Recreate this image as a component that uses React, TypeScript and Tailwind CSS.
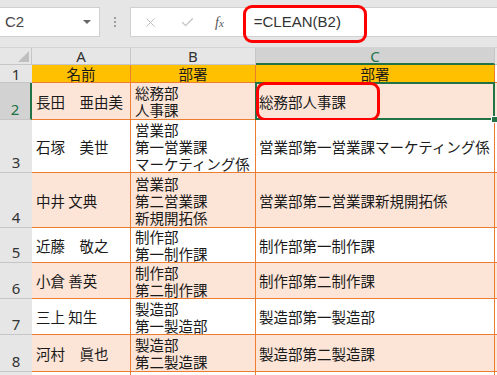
import React from "react";
import { X, Check } from "lucide-react";

interface Row {
    n: number;
    a: string;
    b: string[];
    c: string;
    h: string;
    fill: boolean;
}

const rows: Row[] = [
    { n: 2, a: "長田　亜由美", b: ["総務部", "人事課"], c: "総務部人事課", h: "h-[37px]", fill: true },
    { n: 3, a: "石塚　美世", b: ["営業部", "第一営業課", "マーケティング係"], c: "営業部第一営業課マーケティング係", h: "h-[53px]", fill: false },
    { n: 4, a: "中井 文典", b: ["営業部", "第二営業課", "新規開拓係"], c: "営業部第二営業課新規開拓係", h: "h-[55px]", fill: true },
    { n: 5, a: "近藤　敬之", b: ["制作部", "第一制作課"], c: "制作部第一制作課", h: "h-[35px]", fill: false },
    { n: 6, a: "小倉 善英", b: ["制作部", "第二制作課"], c: "制作部第二制作課", h: "h-[36px]", fill: true },
    { n: 7, a: "三上 知生", b: ["製造部", "第一製造部"], c: "製造部第一製造部", h: "h-[36px]", fill: false },
    { n: 8, a: "河村　眞也", b: ["製造部", "第二製造課"], c: "製造部第二製造課", h: "h-[37px]", fill: true },
];

const jp = "font-['Noto_Sans_CJK_JP',sans-serif] text-[14.5px] leading-[17px] text-[#1a1a1a]";
const hdr = "font-['Noto_Sans','Noto_Sans_CJK_JP',sans-serif] text-[15px] leading-[16px]";

function FormulaBar() {
    return (
        <div className="relative h-[48px] pt-[7px] flex items-start border-b border-[#d4d4d4]">
            <div className="w-[100px] h-[30px] bg-white border border-l-0 border-[#d0d0d0] flex items-center justify-between pl-[5px] pr-[8px]">
                <span className="font-['Liberation_Sans',sans-serif] text-[15px] text-[#444]">C2</span>
                <span className="w-0 h-0 border-l-[4px] border-r-[4px] border-t-[4px] border-l-transparent border-r-transparent border-t-[#666]"></span>
            </div>
            <div className="w-[30px] h-[30px] flex flex-col items-center justify-center gap-[2px]">
                <span className="w-[2px] h-[2px] bg-[#9e9e9e]"></span>
                <span className="w-[2px] h-[2px] bg-[#9e9e9e]"></span>
                <span className="w-[2px] h-[2px] bg-[#9e9e9e]"></span>
            </div>
            <div className="flex-1 h-[30px] bg-white border border-r-0 border-[#d0d0d0] flex items-center">
                <X size={15} strokeWidth={1.6} className="ml-[12px] text-[#c0c0c0]" />
                <Check size={15} strokeWidth={1.8} className="ml-[22px] text-[#c0c0c0]" />
                <span className="ml-[20px] font-['Liberation_Serif',serif] italic text-[14px] text-[#555]">f<span className="text-[11px]">x</span></span>
                <span className="ml-[30px] font-['Liberation_Sans',sans-serif] text-[15px] text-[#333]">=CLEAN(B2)</span>
            </div>
            <div className="absolute left-[243px] top-[5px] w-[124px] h-[38px] border-[3px] border-[#ff0000] rounded-[9px]"></div>
        </div>
    );
}

export default function App() {
    return (
        <div className="w-[497px] h-[375px] overflow-hidden bg-[#e6e6e6]">
            <FormulaBar />
            <div className="grid grid-cols-[32px_99px_125px_239px_1fr] bg-white">
                {/* column headers */}
                <div className="relative h-[17px] bg-[#e6e6e6] border-r border-b border-[#c6c6c6]">
                    <svg className="absolute right-[2px] bottom-[2px]" width="11" height="11"><polygon points="11,0 11,11 0,11" fill="#bfbfbf" /></svg>
                </div>
                <div className={`h-[17px] bg-[#e6e6e6] border-r border-b border-[#c6c6c6] flex items-center justify-center text-[#333] ${hdr}`}>A</div>
                <div className={`h-[17px] bg-[#e6e6e6] border-r border-b border-[#c6c6c6] flex items-center justify-center text-[#333] ${hdr}`}>B</div>
                <div className={`h-[17px] bg-[#d2d2d2] border-r border-[#c6c6c6] border-b-2 border-b-[#217346] flex items-center justify-center text-[#217346] ${hdr}`}>C</div>
                <div className="h-[17px] bg-[#e6e6e6] border-b border-[#c6c6c6]"></div>

                {/* row 1 */}
                <div className={`h-[18px] bg-[#e6e6e6] border-b border-[#c6c6c6] flex items-center justify-center text-[#333] ${hdr}`}>1</div>
                <div className={`h-[18px] bg-[#ffc000] border-r border-b border-[#ed7d31] flex items-center justify-center ${jp}`}>名前</div>
                <div className={`h-[18px] bg-[#ffc000] border-r border-b border-[#ed7d31] flex items-center justify-center ${jp}`}>部署</div>
                <div className={`h-[18px] bg-[#ffc000] border-r border-b border-[#ed7d31] flex items-center justify-center ${jp}`}>部署</div>
                <div className="h-[18px] border-b border-[#ed7d31]"></div>

                {rows.map((r) => {
                    const bg = r.fill ? "bg-[#fce4d6]" : "bg-white";
                    const sel = r.n === 2;
                    return (
                        <React.Fragment key={r.n}>
                            <div className={`${r.h} ${sel ? "bg-[#d2d2d2] border-r-2 border-r-[#217346] text-[#217346]" : "bg-[#e6e6e6] text-[#333]"} border-b border-[#c6c6c6] flex items-end justify-center pb-[2px] ${hdr}`}>
                                {r.n}
                            </div>
                            <div className={`${r.h} ${bg} border-r border-b border-[#ed7d31] flex items-center pl-[4px] whitespace-pre ${jp}`}>{r.a}</div>
                            <div className={`${r.h} ${bg} border-r border-b border-[#ed7d31] flex flex-col justify-center pl-[4px] whitespace-nowrap ${jp}`}>
                                {r.b.map((line) => (
                                    <span key={line}>{line}</span>
                                ))}
                            </div>
                            <div className={`relative ${r.h} ${bg} border-r border-b border-[#ed7d31] flex items-center pl-[3px] whitespace-nowrap ${jp}`}>
                                {r.c}
                                {sel && (
                                    <>
                                        <div className="absolute -top-[1px] -left-[1px] -right-[1px] -bottom-[1px] border-2 border-[#217346]"></div>
                                        <div className="absolute left-0 -top-[1px] w-[124px] h-[39px] border-[3px] border-[#ff0000] rounded-[9px]"></div>
                                        <div className="absolute -right-[4px] -bottom-[4px] w-[7px] h-[7px] bg-[#217346] border border-white z-10"></div>
                                    </>
                                )}
                            </div>
                            <div className={`${r.h} ${bg} border-b border-[#ed7d31]`}></div>
                        </React.Fragment>
                    );
                })}

                <div className="h-[20px] bg-[#e6e6e6]"></div>
                <div className="h-[20px] border-r border-[#ed7d31]"></div>
                <div className="h-[20px] border-r border-[#ed7d31]"></div>
                <div className="h-[20px] border-r border-[#ed7d31]"></div>
                <div className="h-[20px]"></div>
            </div>
        </div>
    );
}
